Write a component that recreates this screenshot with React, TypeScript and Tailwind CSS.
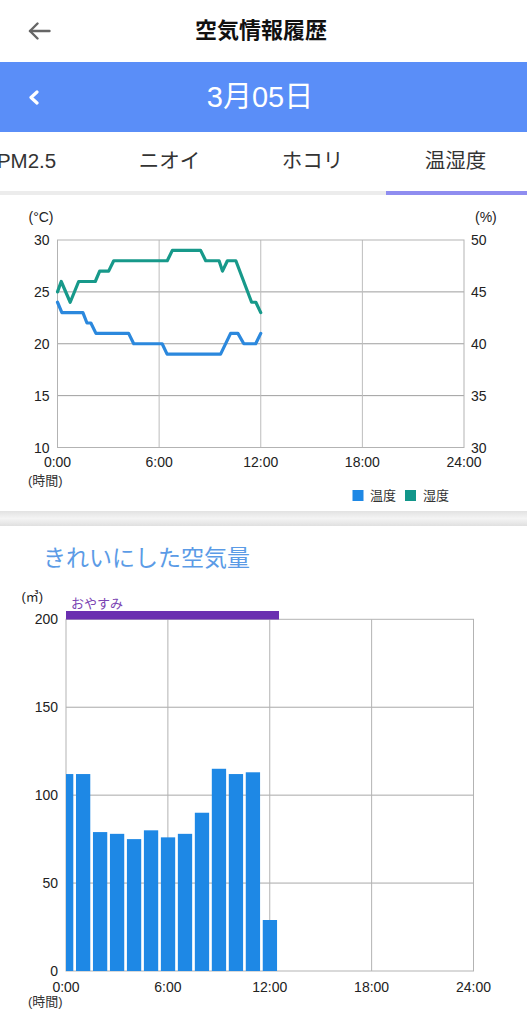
const FONT = "font-['Liberation_Sans','Noto_Sans_CJK_JP',sans-serif]"

// hourly cleaned-air volume (㎥), 0:00 .. 12:00
const AIR = [112, 112, 79, 78, 75, 80, 76, 78, 90, 115, 112, 113, 29]

// [hour, °C]
const TEMP: [number, number][] = [
  [0, 24], [0.26, 23], [1.5, 23], [1.74, 22], [1.97, 22], [2.27, 21], [4.2, 21], [4.5, 20],
  [6.18, 20], [6.47, 19], [9.63, 19], [10.22, 21], [10.65, 21], [11.0, 20], [11.7, 20], [12.0, 21],
]

// [hour, %]
const HUMID: [number, number][] = [
  [0, 45], [0.22, 46], [0.75, 44], [1.25, 46], [2.23, 46], [2.49, 47], [3.02, 47], [3.32, 48],
  [6.48, 48], [6.78, 49], [8.45, 49], [8.75, 48], [9.54, 48], [9.74, 47], [10.03, 48], [10.53, 48],
  [11.46, 44], [11.71, 44], [12.0, 43],
]

const HOURS = ['0:00', '6:00', '12:00', '18:00', '24:00']

function TempChart() {
  const x0 = 57.5, x1 = 464, yTop = 45, yBot = 252.5
  const sx = (h: number) => x0 + (h / 24) * (x1 - x0)
  const sy = (t: number) => yBot - ((t - 10) / 20) * (yBot - yTop)
  const sh = (p: number) => yBot - ((p - 30) / 20) * (yBot - yTop)
  const tempPts = TEMP.map(([h, t]) => `${sx(h)},${sy(t)}`).join(' ')
  const humidPts = HUMID.map(([h, p]) => `${sx(h)},${sh(p)}`).join(' ')

  return (
    <svg width="527" height="316" className="block">
      {[15, 20, 25].map((t) => (
        <line key={t} x1={x0} x2={x1} y1={sy(t)} y2={sy(t)} stroke="#9e9e9e" strokeWidth="1" />
      ))}
      {[6, 12, 18].map((h) => (
        <line key={h} x1={sx(h)} x2={sx(h)} y1={yTop} y2={yBot} stroke="#bdbdbd" strokeWidth="1" />
      ))}
      <rect x={x0} y={yTop} width={x1 - x0} height={yBot - yTop} fill="none" stroke="#b3b3b3" strokeWidth="1" />

      <polyline points={humidPts} fill="none" stroke="#17998a" strokeWidth="3.2" strokeLinejoin="round" strokeLinecap="round" />
      <polyline points={tempPts} fill="none" stroke="#2b88dd" strokeWidth="3.2" strokeLinejoin="round" strokeLinecap="round" />

      <g fontSize="14" fill="#222">
        <text x="28.5" y="27">(°C)</text>
        <text x="475" y="27">(%)</text>
        {[30, 25, 20, 15, 10].map((t) => (
          <text key={t} x="49.5" y={sy(t) + 5} textAnchor="end">{t}</text>
        ))}
        {[50, 45, 40, 35, 30].map((p) => (
          <text key={p} x="471" y={sh(p) + 5}>{p}</text>
        ))}
        {HOURS.map((label, i) => (
          <text key={label} x={sx(i * 6)} y="272" textAnchor="middle">{label}</text>
        ))}
      </g>
      <g fontSize="13" fill="#333">
        <text x="28" y="290">(時間)</text>
        <rect x="352.5" y="295" width="11" height="11" fill="#1e88e5" />
        <text x="370" y="305">温度</text>
        <rect x="405" y="295" width="11" height="11" fill="#12968a" />
        <text x="423" y="305">湿度</text>
      </g>
    </svg>
  )
}

function AirChart() {
  const x0 = 66, x1 = 473.5, yTop = 39.3, yBot = 391
  const step = (x1 - x0) / 24
  const sx = (h: number) => x0 + h * step
  const sy = (v: number) => yBot - (v / 200) * (yBot - yTop)

  return (
    <svg width="527" height="444" className="block">
      {[50, 100, 150].map((v) => (
        <line key={v} x1={x0} x2={x1} y1={sy(v)} y2={sy(v)} stroke="#a8a8a8" strokeWidth="1" />
      ))}
      {[6, 12, 18].map((h) => (
        <line key={h} x1={sx(h)} x2={sx(h)} y1={yTop} y2={yBot} stroke="#b3b3b3" strokeWidth="1" />
      ))}
      <rect x={x0} y={yTop} width={x1 - x0} height={yBot - yTop} fill="none" stroke="#b3b3b3" strokeWidth="1" />

      {AIR.map((v, i) => {
        const left = Math.max(x0, sx(i) - 7)
        const right = sx(i) + 7.3
        return <rect key={i} x={left} y={sy(v)} width={right - left} height={yBot - sy(v)} fill="#1e88e5" />
      })}

      <rect x={x0} y="31" width="213" height="8.5" fill="#6a2fb0" />

      <g fontSize="14" fill="#222">
        {[200, 150, 100, 50, 0].map((v) => (
          <text key={v} x="58" y={sy(v) + 5} textAnchor="end">{v}</text>
        ))}
        {HOURS.map((label, i) => (
          <text key={label} x={sx(i * 6)} y="411.5" textAnchor="middle">{label}</text>
        ))}
      </g>
      <g fontSize="13">
        <text x="21.5" y="20.5" fill="#222">(㎥)</text>
        <text x="71" y="27.5" fill="#7b45b3">おやすみ</text>
        <text x="28" y="426" fill="#333">(時間)</text>
      </g>
    </svg>
  )
}

export default function App() {
  const tabs = ['PM2.5', 'ニオイ', 'ホコリ', '温湿度']

  return (
    <div className={`w-[527px] h-[1024px] overflow-hidden bg-white ${FONT}`}>
      <header className="h-[62px] grid grid-cols-[78px_1fr_78px] items-center">
        <button className="flex justify-center">
          <svg width="23" height="18" viewBox="0 0 23 18" fill="none" stroke="#666" strokeWidth="2.4" strokeLinecap="round" strokeLinejoin="round">
            <path d="M21.5 9H2" />
            <path d="M9.5 1.5L2 9l7.5 7.5" />
          </svg>
        </button>
        <h1 className="text-center text-[22px] font-bold text-[#111] leading-none -mt-[1px] -ml-[5px]">空気情報履歴</h1>
        <div />
      </header>

      <div className="h-[70px] bg-[#5a8ef8] grid grid-cols-[68px_1fr_68px] items-center">
        <button className="flex justify-center">
          <svg width="12" height="15" viewBox="0 0 12 15" fill="none" stroke="#fff" strokeWidth="3.2" strokeLinecap="round" strokeLinejoin="round">
            <path d="M9 2L3 7.5 9 13" />
          </svg>
        </button>
        <div className="text-center text-white text-[29px] leading-none -ml-[7px]">3月05日</div>
        <div />
      </div>

      <nav className="h-[59px] overflow-hidden">
        <div className="flex h-full -ml-[45px]">
          {tabs.map((t) => (
            <div key={t} className="w-[143px] shrink-0 flex items-center justify-center text-[20.5px] text-[#333]">
              {t}
            </div>
          ))}
        </div>
      </nav>
      <div className="h-[4px] bg-[#ececec] flex justify-end">
        <div className="w-[141px] bg-[#8f8df0]" />
      </div>

      <section>
        <TempChart />
      </section>

      <div className="h-[15px] bg-gradient-to-b from-[#e2e2e2] via-[#f4f4f4] to-[#e0e0e0]" />

      <section>
        <h2 className="h-[54px] pt-[17px] pl-[43px] text-[23px] leading-[30px] text-[#5b9be6]">きれいにした空気量</h2>
        <AirChart />
      </section>
    </div>
  )
}
